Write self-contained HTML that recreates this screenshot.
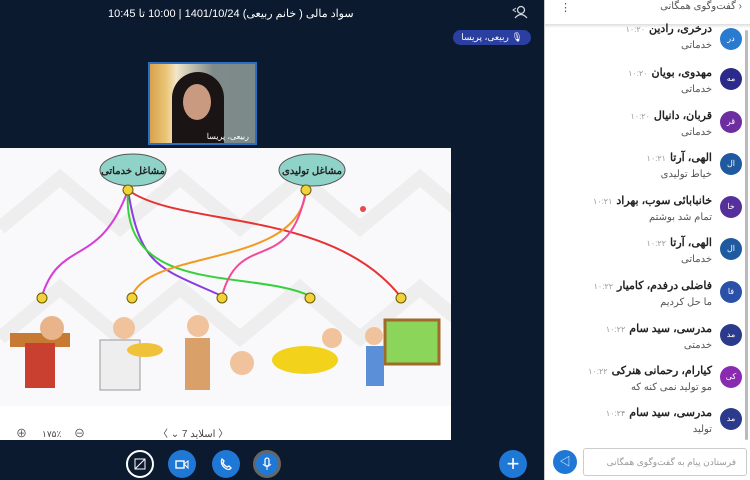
<!DOCTYPE html>
<html><head><meta charset="utf-8"><style>
*{margin:0;padding:0;box-sizing:border-box}
body{width:750px;height:480px;overflow:hidden;background:#0b1a2e;font-family:"Liberation Sans","Noto Sans CJK SC",sans-serif;position:relative}
.t{position:absolute;color:#fff;font-size:12px}
#side{position:absolute;left:544px;top:0;width:206px;height:480px;background:#fff;border-left:1px solid #ccc}
.msg{position:absolute;right:8px;width:190px;height:40px;direction:rtl}
.av{position:absolute;right:0;top:2px;width:22px;height:22px;border-radius:50%;color:#fff;font-size:8px;text-align:center;line-height:22px}
.nm{position:absolute;right:30px;top:0;font-size:11px;font-weight:bold;color:#222;white-space:nowrap}
.nm span{font-weight:normal;color:#999;font-size:8px;margin-right:4px}
.tx{position:absolute;right:30px;top:18px;font-size:10px;color:#555;white-space:nowrap}
.btn{position:absolute;width:28px;height:28px;border-radius:50%;background:#1f78d6;top:450px}
.btn svg{position:absolute;left:7px;top:7px}
</style></head><body>
<div class="t" style="left:108px;top:7px;font-size:11px">سواد مالی ( خانم ربیعی) 1401/10/24 | 10:00 تا 10:45</div>
<svg style="position:absolute;left:512px;top:5px" width="16" height="14"><circle cx="9" cy="5" r="3.5" fill="none" stroke="#cfd6e0" stroke-width="1.3"/><path d="M3 13 Q9 6 15 13" fill="none" stroke="#cfd6e0" stroke-width="1.3"/><path d="M4 3 L1 5 L4 7" fill="none" stroke="#cfd6e0"/></svg>
<div style="position:absolute;left:453px;top:30px;width:78px;height:15px;border-radius:8px;background:#2b3fa0;color:#fff;font-size:9px;text-align:center;line-height:15px;direction:rtl">🎙 ربیعی، پریسا</div>
<div style="position:absolute;left:148px;top:62px;width:109px;height:83px;background:#2b6fc2;padding:2px">
<div style="width:100%;height:100%;background:linear-gradient(90deg,#d8a24e 0,#e9c474 15%,#f3e6c8 25%,#7f8b8a 60%,#7b8a88 100%);position:relative;overflow:hidden">
<div style="position:absolute;left:22px;top:8px;width:52px;height:80px;border-radius:26px 26px 0 0;background:#1b1414"></div>
<div style="position:absolute;left:33px;top:20px;width:28px;height:36px;border-radius:50%;background:#c99a80"></div>
<div style="position:absolute;right:6px;bottom:2px;color:#fff;font-size:8px">ربیعی، پریسا</div></div></div>
<div style="position:absolute;left:0;top:148px;width:451px;height:292px;background:#fff">
<svg width="451" height="292" style="position:absolute;left:0;top:0">
<rect width="451" height="258" fill="#f9f8fa"/>
<g fill="none" stroke="#eee" stroke-width="14"><path d="M0 80 L60 30 L120 80 L180 30 L240 80 L300 30 L360 80 L420 30 L480 80"/><path d="M0 190 L60 140 L120 190 L180 140 L240 190 L300 140 L360 190 L420 140 L480 190"/></g>
<ellipse cx="133" cy="22" rx="33" ry="16" fill="#8fd3c8" stroke="#555"/>
<text x="133" y="26" font-size="10" text-anchor="middle" font-weight="bold" fill="#222">مشاغل خدماتی</text>
<ellipse cx="312" cy="22" rx="33" ry="16" fill="#8fd3c8" stroke="#555"/>
<text x="312" y="26" font-size="10" text-anchor="middle" font-weight="bold" fill="#222">مشاغل تولیدی</text>
<g fill="none" stroke-width="2">
<path d="M128 42 C100 120 60 90 42 148" stroke="#d83cd8"/>
<path d="M128 42 C140 120 160 120 222 148" stroke="#8a3ce0"/>
<path d="M128 42 C120 150 250 120 310 148" stroke="#36d13a"/>
<path d="M128 42 C180 80 330 60 400 148" stroke="#e63232"/>
<path d="M306 42 C300 120 150 100 132 148" stroke="#f29a22"/>
<path d="M306 42 C290 130 240 80 222 148" stroke="#f04a9a"/>
</g>
<g fill="#f1d23a" stroke="#6b5b00"><circle cx="128" cy="42" r="5"/><circle cx="306" cy="42" r="5"/><circle cx="42" cy="150" r="5"/><circle cx="132" cy="150" r="5"/><circle cx="222" cy="150" r="5"/><circle cx="310" cy="150" r="5"/><circle cx="401" cy="150" r="5"/></g>
<circle cx="363" cy="61" r="3" fill="#e84a4a"/>
<rect x="10" y="185" width="60" height="14" fill="#c77a33"/><circle cx="52" cy="180" r="12" fill="#e9b48a"/><rect x="25" y="195" width="30" height="45" fill="#c94030"/>
<circle cx="124" cy="180" r="11" fill="#f1c39c"/><rect x="100" y="192" width="40" height="50" fill="#eee" stroke="#999"/><ellipse cx="145" cy="202" rx="18" ry="7" fill="#f0c23a"/>
<circle cx="198" cy="178" r="11" fill="#f1c39c"/><rect x="185" y="190" width="25" height="52" fill="#d9a069"/><circle cx="242" cy="215" r="12" fill="#f1c39c"/>
<ellipse cx="305" cy="212" rx="33" ry="14" fill="#f3d21c"/><circle cx="332" cy="190" r="10" fill="#f1c39c"/>
<rect x="385" y="172" width="54" height="44" fill="#8bd65a" stroke="#a06a2a" stroke-width="3"/><circle cx="374" cy="188" r="9" fill="#f1c39c"/><rect x="366" y="198" width="18" height="40" fill="#5b8fd8"/>
<rect y="274" width="451" height="18" fill="#fff"/>
<text x="16" y="289" font-size="11" fill="#444">⊕</text><text x="42" y="289" font-size="9" fill="#444">۱۷۵٪</text><text x="74" y="289" font-size="11" fill="#444">⊖</text>
<text x="158" y="289" font-size="10" fill="#444">〈  ⌄  7 اسلاید  〉</text>
</svg></div>
<div class="btn" style="left:126px;background:#0b1a2e;border:2px solid #fff"><svg width="12" height="12" style="left:6px;top:6px"><rect x="1" y="1" width="10" height="10" fill="none" stroke="#fff"/><path d="M1 11 L11 1" stroke="#fff"/></svg></div>
<div class="btn" style="left:168px"><svg width="14" height="14"><rect x="1" y="4" width="8" height="7" fill="none" stroke="#fff" stroke-width="1.4"/><path d="M9 7 L13 4 L13 11 Z" fill="none" stroke="#fff"/></svg></div>
<div class="btn" style="left:212px"><svg width="14" height="14"><path d="M3 2 Q1 7 6 11 Q10 14 12 11 L10 9 L8 10 Q5 8 4 6 L5 4 Z" fill="none" stroke="#fff" stroke-width="1.3"/></svg></div>
<div class="btn" style="left:253px;border:3px solid #666"><svg width="14" height="14" style="left:4px;top:4px"><rect x="5" y="1" width="4" height="8" rx="2" fill="none" stroke="#fff" stroke-width="1.3"/><path d="M3 7 Q7 12 11 7 M7 10 L7 13" fill="none" stroke="#fff"/></svg></div>
<div class="btn" style="left:499px;color:#fff;font-size:22px;text-align:center;line-height:27px">+</div>
<div id="side">
<div style="position:absolute;right:8px;top:1px;font-size:10px;color:#555;direction:rtl">‹ گفت‌وگوی همگانی</div>
<div style="position:absolute;left:15px;top:1px;font-size:11px;color:#555">⋮</div>
<div style="position:absolute;left:0;top:24px;width:206px;height:4px;background:linear-gradient(#ddd,#fff)"></div>
<div class="msg" style="top:22px"><div class="av" style="background:#2a7ad0;top:6px">در</div><div class="nm">درخری، رادین<span>۱۰:۲۰</span></div><div class="tx">خدماتی</div></div>
<div class="msg" style="top:66px"><div class="av" style="background:#2b2a8a">مه</div><div class="nm">مهدوی، بویان<span>۱۰:۲۰</span></div><div class="tx">خدماتی</div></div>
<div class="msg" style="top:109px"><div class="av" style="background:#6d2ea0">قر</div><div class="nm">قربان، دانیال<span>۱۰:۲۰</span></div><div class="tx">خدماتی</div></div>
<div class="msg" style="top:151px"><div class="av" style="background:#1f5aa0">ال</div><div class="nm">الهی، آرتا<span>۱۰:۲۱</span></div><div class="tx">خیاط تولیدی</div></div>
<div class="msg" style="top:194px"><div class="av" style="background:#55309a">خا</div><div class="nm">خانبابائی سوب، بهراد<span>۱۰:۲۱</span></div><div class="tx">تمام شد بوشتم</div></div>
<div class="msg" style="top:236px"><div class="av" style="background:#1f5aa0">ال</div><div class="nm">الهی، آرتا<span>۱۰:۲۲</span></div><div class="tx">خدماتی</div></div>
<div class="msg" style="top:279px"><div class="av" style="background:#2a50a8">فا</div><div class="nm">فاضلی درفدم، کامیار<span>۱۰:۲۲</span></div><div class="tx">ما حل کردیم</div></div>
<div class="msg" style="top:322px"><div class="av" style="background:#2b3a8a">مد</div><div class="nm">مدرسی، سید سام<span>۱۰:۲۲</span></div><div class="tx">خدمتی</div></div>
<div class="msg" style="top:364px"><div class="av" style="background:#8a2ab0">کی</div><div class="nm">کیارام، رحمانی هنرکی<span>۱۰:۲۲</span></div><div class="tx">مو تولید نمی کنه که</div></div>
<div class="msg" style="top:406px"><div class="av" style="background:#2b3a8a">مد</div><div class="nm">مدرسی، سید سام<span>۱۰:۲۴</span></div><div class="tx">تولید</div></div>
<div style="position:absolute;right:2px;top:30px;width:3px;height:410px;background:#bbb;border-radius:2px"></div>
<div style="position:absolute;left:8px;top:450px;width:24px;height:24px;border-radius:50%;background:#1f78d6;color:#fff;font-size:11px;text-align:center;line-height:24px">◁</div>
<div style="position:absolute;left:38px;top:448px;width:164px;height:28px;border:1px solid #ccc;border-radius:3px;font-size:9px;color:#999;direction:rtl;padding:8px 10px">فرستادن پیام به گفت‌وگوی همگانی</div>
</div>
</body></html>
